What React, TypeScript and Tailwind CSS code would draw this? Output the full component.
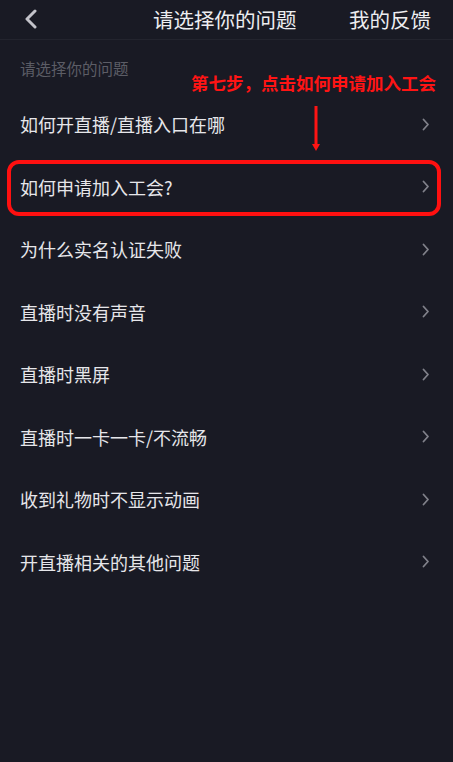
const QUESTIONS = [
  "如何开直播/直播入口在哪",
  "如何申请加入工会?",
  "为什么实名认证失败",
  "直播时没有声音",
  "直播时黑屏",
  "直播时一卡一卡/不流畅",
  "收到礼物时不显示动画",
  "开直播相关的其他问题",
];

const FONT = { fontFamily: '"Noto Sans CJK SC", "Noto Sans", sans-serif' };

function Chevron() {
  return (
    <svg width="8" height="13" viewBox="0 0 8 13" fill="none" aria-hidden="true">
      <path d="M1.5 1.5L6 6.5L1.5 11.5" stroke="#80818a" strokeWidth="1.8" strokeLinecap="round" strokeLinejoin="round" />
    </svg>
  );
}

export default function App() {
  return (
    <div className="relative h-[762px] w-[453px] overflow-hidden bg-[#191a24] text-[#e6e6ea]" style={FONT}>
      <header className="flex h-[40px] items-center border-b border-[#23242e] pl-[23px] pr-[22px] pb-[2px]">
        <svg width="16" height="20" viewBox="0 0 16 20" fill="none" aria-hidden="true">
          <path d="M12 2L4 10L12 18" stroke="#c3c3ca" strokeWidth="3" strokeLinecap="round" strokeLinejoin="round" />
        </svg>
        <h1 className="ml-[114px] text-[20.5px] leading-[26px] text-[#ededf0]">请选择你的问题</h1>
        <span className="ml-auto text-[20.5px] leading-[26px] text-[#ededf0]">我的反馈</span>
      </header>

      <p className="pl-[20px] pt-[18px] pb-[15px] text-[15.5px] leading-[20px] text-[#5c5d66]">请选择你的问题</p>

      <ul>
        {QUESTIONS.map((q) => (
          <li key={q} className="flex h-[62.5px] items-center justify-between pl-[20px] pr-[23px]">
            <span className="text-[18px] leading-[24px]">{q}</span>
            <Chevron />
          </li>
        ))}
      </ul>

      <p className="absolute left-[191px] top-[71px] text-[17.5px] font-bold leading-[24px] text-[#ff1414]">
        第七步，点击如何申请加入工会
      </p>
      <svg className="absolute left-[309px] top-[105px]" width="14" height="48" viewBox="0 0 14 48" aria-hidden="true">
        <path d="M7 1V40" stroke="#ff1414" strokeWidth="3" />
        <path d="M3 39L7 46L11 39Z" fill="#ff1414" />
      </svg>
      <div className="absolute left-[7px] top-[160px] h-[56px] w-[434px] rounded-[12px] border-[4px] border-[#ff1010]" />
    </div>
  );
}
